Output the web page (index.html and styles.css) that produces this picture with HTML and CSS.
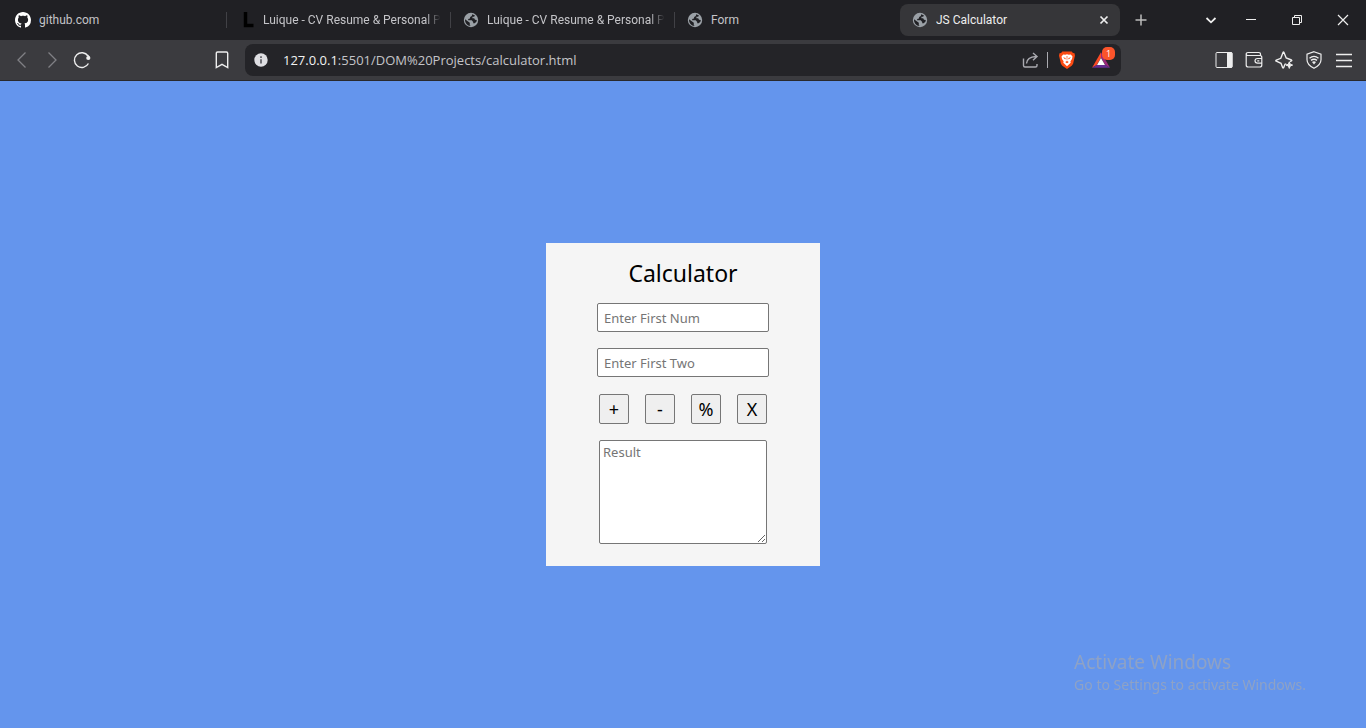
FILE: index.html
```html
<!DOCTYPE html>
<html lang="en">
<head>
<meta charset="utf-8">
<meta name="viewport" content="width=device-width, initial-scale=1">
<title>JS Calculator</title>
<link rel="stylesheet" href="styles.css">
</head>
<body>
<svg class="defs" aria-hidden="true">
  <symbol id="globe" viewBox="0 0 16 16">
    <circle cx="8" cy="8" r="7.200" fill="#9aa0a6"/>
    <path class="land" d="M9.200 2.300l-.4 1.700-1.600.9-.3 1.600-1.700.5v1.300h3.500l1.500 1.600v1.300h1.500l1.700-1.500.4-1.700-1.800-.3-.8-1.500h-1.800V4.800h1.700l.9-1.300zM2 7.200l4.800 3.600v2.200l.8 1C4.300 13.800 1.900 11.200 2 7.200z"/>
  </symbol>
</svg>

<header class="browser">
  <nav class="tabs" aria-label="Tabs">
    <div class="tab divided">
      <svg class="favicon" viewBox="0 0 16 16" fill="#fff" aria-hidden="true"><path d="M8 0C3.580 0 0 3.580 0 8c0 3.540 2.290 6.530 5.470 7.590.4.070.55-.17.55-.38 0-.19-.01-.82-.01-1.490-2.010.37-2.530-.49-2.690-.94-.09-.23-.48-.94-.82-1.130-.28-.15-.68-.52-.01-.53.63-.01 1.080.58 1.230.82.72 1.210 1.870.87 2.330.66.070-.52.280-.87.510-1.070-1.780-.2-3.640-.89-3.640-3.950 0-.87.310-1.590.82-2.150-.08-.2-.36-1.020.08-2.120 0 0 .67-.21 2.200.82.64-.18 1.320-.27 2-.27s1.360.09 2 .27c1.530-1.040 2.200-.82 2.200-.82.44 1.100.16 1.920.08 2.120.51.56.82 1.270.82 2.150 0 3.070-1.870 3.750-3.650 3.950.29.25.54.73.54 1.480 0 1.070-.01 1.930-.01 2.200 0 .21.150.46.550.38A8.010 8.010 0 0 0 16 8c0-4.420-3.580-8-8-8z"/></svg>
      <button class="tab-title" type="button">github.com</button>
    </div>
    <div class="tab divided">
      <svg class="favicon" viewBox="0 0 16 16" aria-hidden="true"><path d="M6.500 0v13.500h8" fill="none" stroke="#000" stroke-width="3.500"/></svg>
      <button class="tab-title faded" type="button">Luique - CV Resume &amp; Personal P</button>
    </div>
    <div class="tab divided">
      <svg class="favicon" aria-hidden="true"><use href="#globe"/></svg>
      <button class="tab-title faded" type="button">Luique - CV Resume &amp; Personal P</button>
    </div>
    <div class="tab">
      <svg class="favicon" aria-hidden="true"><use href="#globe"/></svg>
      <button class="tab-title" type="button">Form</button>
    </div>
    <div class="tab active">
      <svg class="favicon" aria-hidden="true"><use href="#globe"/></svg>
      <button class="tab-title" type="button">JS Calculator</button>
      <button class="tab-close" type="button" aria-label="Close tab"><svg viewBox="0 0 16 16"><path d="M4.500 4.500l7 7M11.500 4.500l-7 7" stroke-width="1.700"/></svg></button>
    </div>
    <button class="new-tab" type="button" aria-label="New tab"><svg viewBox="0 0 16 16"><path d="M8 2.500v11M2.500 8h11" stroke="#bbb" stroke-width="1.500"/></svg></button>
    <div class="window-controls">
      <button type="button" aria-label="Search tabs"><svg viewBox="0 0 16 16"><path d="M3.500 6L8 10.300 12.500 6" stroke-width="1.800"/></svg></button>
      <button class="wide" type="button" aria-label="Minimize"><svg viewBox="0 0 16 16"><path d="M3 7.500h10"/></svg></button>
      <button class="wide" type="button" aria-label="Restore"><svg viewBox="0 0 16 16"><path d="M3.500 5.500h7v7h-7zM5.500 5.500v-2h7v7h-2"/></svg></button>
      <button class="wide" type="button" aria-label="Close window"><svg viewBox="0 0 16 16"><path d="M3 3l10 10M13 3L3 13" stroke-width="1.200"/></svg></button>
    </div>
  </nav>

  <div class="toolbar">
    <div class="nav-buttons">
      <button class="dim" type="button" aria-label="Back"><svg viewBox="0 0 18 18"><path d="M12.500 1.500L5 9l7.500 7.500" stroke-width="1.300"/></svg></button>
      <button class="dim" type="button" aria-label="Forward"><svg viewBox="0 0 18 18"><path d="M5.500 1.500L13 9l-7.500 7.500" stroke-width="1.300"/></svg></button>
      <button type="button" aria-label="Reload"><svg viewBox="0 0 18 18"><path d="M15 5A7.400 7.400 0 1 0 15.400 12.500M16.500 7A7.500 7.500 0 0 0 14.500 4" stroke-width="1.400"/><circle cx="15.300" cy="7" r="2.100" fill="#eee" stroke="none"/></svg></button>
    </div>
    <button class="bookmark" type="button" aria-label="Bookmark"><svg viewBox="0 0 18 18"><path d="M3.300 2.300q0-1.300 1.300-1.300h8.800q1.300 0 1.300 1.300V16.500L9 13.300l-5.700 3.200z" stroke-width="1.400"/></svg></button>
    <div class="address">
      <svg class="info" viewBox="0 0 14 14" aria-hidden="true"><circle cx="7" cy="7" r="6.700" fill="#dedee2"/><path d="M7 6.200v4.200M7 3.300v1.600" stroke="#4a4a50" stroke-width="1.500"/></svg>
      <span class="url"><span class="host">127.0.0.1</span>:5501/DOM%20Projects/calculator.html</span>
      <button class="share" type="button" aria-label="Share"><svg viewBox="0 0 18 18"><path d="M1.500 7.500v7q0 1.500 1.500 1.500h10.500q1.500 0 1.500-1.500v-1.500M4.500 12.500Q5 6 14 5.500M11 2l4 3.500-4 3.700" stroke="#aaaab0" stroke-width="1.400"/></svg></button>
      <span class="rule"></span>
      <button class="shields" type="button" aria-label="Shields"><svg viewBox="0 0 18 18"><path d="M4.300.6h9.400l1.200 1.500 1.600.1 .5 2.600-.4 1.500-1.500 6.500-1.400 2L9 17.900l-4.700-3.100-1.400-2L1.400 6.300 1 4.800l.5-2.600 1.600-.1z" fill="#fb4a12" stroke="none"/><path d="M5.200 3.400l2.100.3L9 3.300l1.700.4 2.100-.3 1.700 2-.5 2.500-1.600 2.300.3 1.500L9 15.300l-3.700-3.600.3-1.500L4 7.900l-.5-2.500z" fill="#fff" stroke="none"/><path d="M5 6.200l2.700.8-.4 1.500zM13 6.200l-2.700.8.4 1.500zM8.600 5h.8l-.2 4.500h-.4zM7.200 10.900L9 10l1.800.9L9 12.200z" fill="#fb4a12" stroke="none"/></svg></button>
      <button class="rewards" type="button" aria-label="Rewards, 1 notification"><svg viewBox="0 0 18 18"><path d="M9 1.200L0 16.800l4.700-2.700L9 6.700z" fill="#fc4a25" stroke="none"/><path d="M9 1.200v5.500l4.300 7.400L18 16.800z" fill="#9b287b" stroke="none"/><path d="M0 16.800l4.700-2.700h8.600l4.700 2.700z" fill="#662d91" stroke="none"/><path d="M9 7l4 7H5z" fill="#fff" stroke="none"/></svg><span class="badge">1</span></button>
    </div>
    <div class="actions">
      <button type="button" aria-label="Sidebar"><svg viewBox="0 0 18 18"><rect x="1" y="1.500" width="16" height="15" rx="1"/><path d="M12.500 1.500H16q1 0 1 1v13q0 1-1 1h-3.500z" fill="#eee"/></svg></button>
      <button type="button" aria-label="Wallet"><svg viewBox="0 0 18 18"><path d="M15.500 4.500V3.200q0-1.700-1.700-1.700H3Q1.200 1.500 1.200 3V14q0 2 2 2h11.600q2 0 2-2V6.500q0-2-2-2H3Q1.200 4.500 1.200 3M16.800 7.500h-4.300q-2.500 0-2.500 2.300t2.500 2.300h4.300M12.300 9.800h2" stroke-width="1.200"/></svg></button>
      <button type="button" aria-label="Assistant"><svg viewBox="0 0 18 18"><path d="M11.300 12.800l-1.300.4-1.400 3.500q-.5.700-.9 0L6 12.300 1.300 10.200q-1-.6 0-1.100L5.800 7.300 8 1.500q.5-1 1 0l2.200 5.500 5.200 2q.8.500 0 1l-1.400.6" stroke-width="1.400"/><path d="M14.300 10.800l.9 2.400 2.400.9-2.400.9-.9 2.400-.9-2.400-2.400-.9 2.400-.9z" fill="#eee"/></svg></button>
      <button type="button" aria-label="VPN"><svg viewBox="0 0 18 18"><path d="M9 .7l7 2.500v5.500q0 5-7 8.600-7-3.600-7-8.600V3.200z" stroke-width="1.200"/><path d="M4.500 7.200Q9 3.600 13.500 7.200M6 9.400q3-2.300 6 0" stroke-width="1.400"/><path d="M7 11q2-1.300 4 0l-2 2.500z" fill="#eee" stroke="none"/></svg></button>
      <button type="button" aria-label="Menu"><svg viewBox="0 0 18 18"><path d="M1 3.500h16M1 9.500h16M1 15.500h16" stroke-width="1.300"/></svg></button>
    </div>
  </div>
</header>

<main class="page">
  <form class="calculator">
    <h1 class="title">Calculator</h1>
    <input class="number" type="text" placeholder="Enter First Num" aria-label="First number">
    <input class="number" type="text" placeholder="Enter First Two" aria-label="Second number">
    <div class="operators">
      <button class="operator" type="button">+</button>
      <button class="operator" type="button">-</button>
      <button class="operator" type="button">%</button>
      <button class="operator" type="button">X</button>
    </div>
    <textarea class="result" placeholder="Result" aria-label="Result"></textarea>
  </form>
</main>

<aside class="watermark">
  <p class="watermark-title">Activate Windows</p>
  <p class="watermark-text">Go to Settings to activate Windows.</p>
</aside>
</body>
</html>
```
FILE: styles.css
```css
* { box-sizing: border-box; }

body {
  margin: 0;
  min-height: 100vh;
  display: flex;
  flex-direction: column;
  background: #6495ed;
  font-family: "Open Sans", "Noto Sans", sans-serif;
}

.defs { position: absolute; width: 0; height: 0; }
.land { fill: #202024; }

.browser { background: #202024; color: #c4c4c8; }

.browser button {
  display: flex;
  align-items: center;
  justify-content: center;
  padding: 0;
  border: 0;
  background: none;
  color: inherit;
  font: inherit;
}

.browser button svg {
  display: block;
  width: 18px;
  height: 18px;
  fill: none;
  stroke: #eee;
}

.tabs {
  display: flex;
  align-items: center;
  gap: 4px;
  height: 40px;
  padding-left: 4px;
  font-family: Roboto, "Open Sans", sans-serif;
  font-size: 12px;
}

.tab {
  position: relative;
  display: flex;
  align-items: center;
  gap: 8px;
  flex: 0 1 220px;
  min-width: 0;
  height: 32px;
  padding: 0 4px 0 11px;
  border-radius: 8px;
}

.tab.divided::after {
  content: "";
  position: absolute;
  right: -3px;
  top: 8px;
  width: 1px;
  height: 16px;
  background: #414146;
}

.tab.active { padding: 0 8px 0 12px; background: #363639; color: #eee; }
.tab.active .land { fill: #363639; }

.favicon { flex: none; width: 16px; height: 16px; }

.browser .tab-title {
  display: block;
  flex: 1;
  min-width: 0;
  overflow: hidden;
  white-space: nowrap;
  text-align: left;
  line-height: 20px;
}

.browser .tab-title.faded { mask-image: linear-gradient(to right, #000 90%, transparent 98%); }

.browser .tab-close svg,
.browser .new-tab svg,
.window-controls button svg { width: 16px; height: 16px; }

.new-tab { width: 34px; height: 32px; }

.window-controls { display: flex; margin-left: auto; height: 40px; }
.window-controls button { width: 34px; }
.window-controls .wide { width: 46px; }

.toolbar {
  display: flex;
  align-items: center;
  height: 41px;
  padding: 0 7px;
  background: #3b3b3f;
  border-bottom: 1px solid #29292c;
}

.nav-buttons, .actions { display: flex; }
.nav-buttons button, .actions button, .bookmark { width: 30px; height: 30px; }
.browser .dim svg { stroke: #808085; }
.bookmark { margin-left: auto; margin-right: 8px; }

.address {
  display: flex;
  align-items: center;
  flex: 0 1 876px;
  min-width: 0;
  height: 32px;
  padding: 0 11px 0 9px;
  border-radius: 8px;
  background: #242428;
}

.info { flex: none; width: 14px; height: 14px; }

.url {
  flex: 1;
  min-width: 0;
  margin-left: 15px;
  overflow: hidden;
  white-space: nowrap;
  font-size: 13px;
  line-height: 20px;
}

.host { color: #f2f2f2; }
.rule { width: 1px; height: 16px; margin: 0 10px 0 7px; background: #aaaab0; }
.rewards { position: relative; margin-left: 16px; }

.badge {
  position: absolute;
  top: -4px;
  right: -5px;
  width: 13px;
  height: 13px;
  border-radius: 5px;
  background: #fb542b;
  color: #fff;
  font-size: 9px;
  line-height: 13px;
  text-align: center;
}

.actions { margin-left: 88px; }

.page {
  flex: 1;
  display: flex;
  align-items: center;
  justify-content: center;
}

.calculator {
  display: flex;
  flex-direction: column;
  align-items: center;
  gap: 16px;
  width: 274px;
  padding: 16px 16px 22px;
  background: #f5f5f5;
}

.calculator, .number, .operator, .result { font-family: "Noto Sans", "Open Sans", sans-serif; }

.title {
  margin: 0;
  font-size: 23px;
  font-weight: 400;
  line-height: 28px;
}

.number, .operator, .result {
  margin: 0;
  border: 1px solid #767676;
  border-radius: 2px;
}

.number {
  width: 172px;
  height: 29px;
  padding: 1px 6px 0;
  background: #fff;
  font-size: 13px;
}

.operators { display: flex; gap: 16px; padding-top: 1px; }

.operator {
  width: 30px;
  height: 30px;
  padding: 0;
  background: #efefef;
  color: #000;
  font-size: 18px;
  line-height: 28px;
}

.result {
  display: block;
  width: 168px;
  height: 104px;
  padding: 3px;
  background: #fff;
  font-size: 13px;
  line-height: 17px;
  resize: both;
}

.number::placeholder, .result::placeholder { color: #757575; }

.watermark {
  position: fixed;
  right: 60px;
  bottom: 33px;
  color: #8ea2c6;
  font-family: "Noto Sans", "Open Sans", sans-serif;
  white-space: nowrap;
  pointer-events: none;
}

.watermark p { margin: 0; }
.watermark-title { font-size: 19px; line-height: 25px; }
.watermark-text { font-size: 14px; line-height: 20px; }
```
